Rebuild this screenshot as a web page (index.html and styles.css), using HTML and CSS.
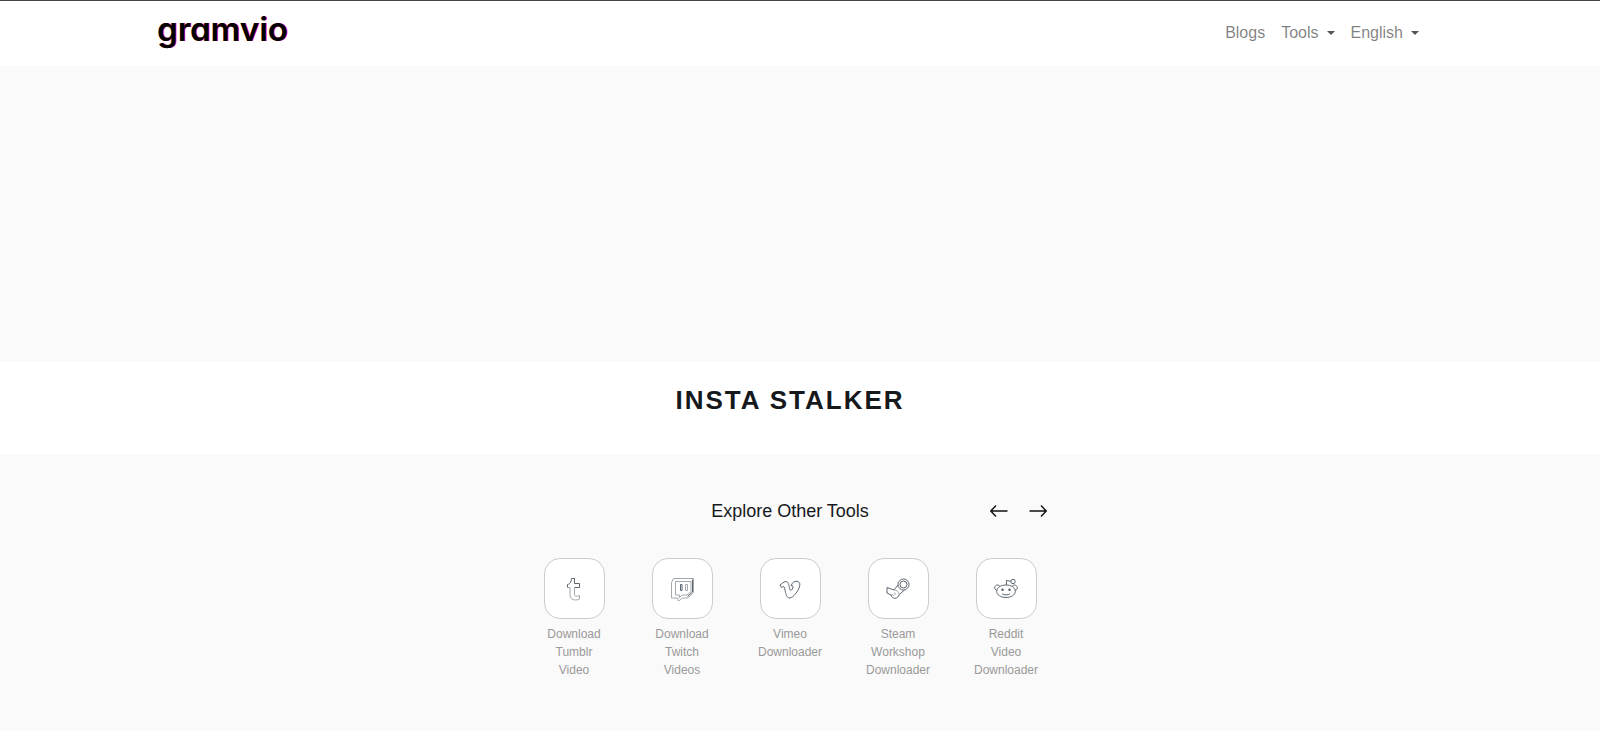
FILE: index.html
```html
<!DOCTYPE html>
<html lang="en">
<head>
    <meta charset="UTF-8">
    <meta name="viewport" content="width=device-width, initial-scale=1.0">
    <title>Insta Stalker</title>
    <link rel="stylesheet" href="styles.css">
</head>
<body>
    <header class="navbar">
        <div class="container">
            <a class="logo" href="#">gramvio</a>
            <nav class="nav-links">
                <a class="nav-link" href="#">Blogs</a>
                <button class="nav-link dropdown" type="button">Tools</button>
                <button class="nav-link dropdown" type="button">English</button>
            </nav>
        </div>
    </header>

    <div class="banner"></div>

    <main>
        <section class="title">
            <h1>INSTA STALKER</h1>
        </section>

        <section class="tools">
            <div class="tools-inner">
                <div class="tools-head">
                    <h2>Explore Other Tools</h2>
                    <div class="arrows">
                        <button class="arrow" type="button" aria-label="Previous">
                            <svg width="18" height="12" viewBox="0 0 18 12"><path d="M17.5 6H1M6 .5L.8 6 6 11.500"/></svg>
                        </button>
                        <button class="arrow" type="button" aria-label="Next">
                            <svg width="18" height="12" viewBox="0 0 18 12"><path d="M.5 6H17M12 .5L17.200 6 12 11.500"/></svg>
                        </button>
                    </div>
                </div>

                <div class="tool-list">
                    <a class="tool" href="#">
                        <span class="tool-icon">
                            <svg width="24" height="24" viewBox="0 0 24 24">
                                <path class="dark" d="M5.500 10.500V7.500C8 7 9 5.500 9.500 1.500h3v5h5v4h-5"/>
                                <path d="M5.500 10.500h2.500v7c0 3.500 2 5.500 5.500 5.500 1.500 0 3-.3 4-1v-3.500c-1 .5-2 .7-3 .7-1.400 0-2-.7-2-2v-6.700"/>
                            </svg>
                        </span>
                        <span class="tool-name">Download Tumblr Video</span>
                    </a>
                    <a class="tool" href="#">
                        <span class="tool-icon">
                            <svg width="24" height="24" viewBox="0 0 24 24">
                                <path d="M1.500 5.500l2-4h20v14l-6 5.500h-5l-3 2.500h-1.500v-2.500h-6.500z"/>
                                <path d="M5.500 4.500h15.500v10l-4 3.500h-5l-2.500 2.500v-2.500h-4z"/>
                                <path class="dark" d="M22.500 2.500v12.500l-5 4.500"/>
                                <path class="dark" d="M10.500 7.500h1.500v6h-1.500z"/>
                                <path d="M15.500 7.500h2v6h-2z"/>
                            </svg>
                        </span>
                        <span class="tool-name">Download Twitch Videos</span>
                    </a>
                    <a class="tool" href="#">
                        <span class="tool-icon">
                            <svg width="24" height="24" viewBox="0 0 24 24">
                                <path class="dark" d="M2 8C4 6.500 6 4.500 8 4.500c2.500 0 2.800 3.500 3.400 6 .4 1.800.7 3 1.200 3 .8 0 2.500-2.300 2.500-3.600 0-1.200-.9-1.400-2-1 .8-3 3-4.800 5.700-4.600 2.400.2 3.300 1.800 3 4-.6 4.800-6.500 12.400-9.900 12.700-2.700.2-3.700-2.700-4.400-5.700-.7-2.800-1-5.800-2-5.800-.6 0-1.500.7-2 1z"/>
                            </svg>
                        </span>
                        <span class="tool-name">Vimeo Downloader</span>
                    </a>
                    <a class="tool" href="#">
                        <span class="tool-icon">
                            <svg width="24" height="24" viewBox="0 0 24 24">
                                <circle class="dark" cx="17.500" cy="7.500" r="5.500"/>
                                <circle class="dark" cx="17.500" cy="7.500" r="3.500"/>
                                <path class="dark" d="M12 8l-4 5L1 10.500v5.500l4 2c.5 2 2 3.300 3.900 3.300 2.200 0 3.800-1.500 4.100-3.600l5.500-4.700"/>
                                <path d="M8 13c2.800-.2 5 1.800 5 4.500M5 17.500l1.800.7c1.800.7 3.400-1.600 1.700-2.900"/>
                            </svg>
                        </span>
                        <span class="tool-name">Steam Workshop Downloader</span>
                    </a>
                    <a class="tool" href="#">
                        <span class="tool-icon">
                            <svg width="24" height="24" viewBox="0 0 24 24">
                                <path class="dark" d="M12 8c5.200 0 9.300 2.700 9.300 6.300S17.200 20.500 12 20.500s-9.300-2.600-9.300-6.200S6.800 8 12 8z"/>
                                <path class="dark" d="M12.500 8V3.500l4.500.8M2.700 13.300C-.8 12 .8 8 3.500 8c1.200 0 1.800.5 2.300 1.200M21.300 13.300c3.500-1.300 1.900-5.300-.8-5.300-1.200 0-1.800.5-2.300 1.200"/>
                                <circle class="dark" cx="19" cy="4.500" r="2.200"/>
                                <circle class="eye" cx="8.500" cy="12.800" r="1.300"/>
                                <circle class="eye" cx="15.500" cy="12.800" r="1.300"/>
                                <path class="dark" d="M8 16.800c2 1.500 6 1.500 8 0"/>
                            </svg>
                        </span>
                        <span class="tool-name">Reddit Video Downloader</span>
                    </a>
                </div>
            </div>
        </section>
    </main>
</body>
</html>
```
FILE: styles.css
```css
* {
    box-sizing: border-box;
}

body {
    margin: 0;
    min-height: 100vh;
    display: flex;
    flex-direction: column;
    font-family: "Liberation Sans", Arial, sans-serif;
    font-size: 16px;
    color: #16191c;
    background-color: #fafafa;
}

a {
    text-decoration: none;
}

button {
    border: none;
    background: none;
    font-family: inherit;
    font-size: inherit;
    cursor: pointer;
}

/* Header */
.navbar {
    border-top: 1px solid #444;
    background-color: #fff;
    padding: 12px 20px 13px 0;
}

.container {
    max-width: 1274px;
    margin: 0 auto;
    display: flex;
    align-items: flex-start;
    justify-content: space-between;
}

.logo {
    padding-left: 4px;
    font-family: "Inter", sans-serif;
    font-size: 33px;
    font-weight: 600;
    line-height: 32px;
    font-feature-settings: "cv11";
    color: #000;
    text-shadow: 1px 0 0 #ff1a8c;
}

.nav-links {
    display: flex;
    align-items: center;
}

.nav-link {
    display: flex;
    align-items: center;
    padding: 8px;
    line-height: 24px;
    color: rgba(0, 0, 0, 0.5);
}

.dropdown::after {
    content: "";
    margin-left: 8px;
    border-top: 4px solid #555;
    border-left: 4px solid transparent;
    border-right: 4px solid transparent;
}

/* Advert space */
.banner {
    height: 296px;
}

.title {
    background-color: #fff;
    padding: 22px 20px 38px 0;
    text-align: center;
}

.title h1 {
    margin: 0;
    font-size: 26px;
    line-height: 32px;
    letter-spacing: 2px;
}

/* Tools carousel */
.tools {
    padding: 44px 20px 48px 0;
}

.tools-inner {
    max-width: 540px;
    margin: 0 auto;
}

.tools-head {
    display: grid;
    grid-template-columns: 1fr auto 1fr;
    align-items: center;
    margin-bottom: 34px;
}

.tools-head h2 {
    grid-column: 2;
    margin: 0;
    font-size: 18px;
    font-weight: 400;
    line-height: 26px;
}

.arrows {
    display: flex;
    justify-content: flex-end;
    gap: 21px;
    padding-right: 13px;
}

.arrow {
    display: flex;
    padding: 0;
}

svg {
    fill: none;
    stroke: #a3a8ac;
    stroke-width: 1;
}

.arrow svg {
    stroke: #111;
    stroke-width: 1.4;
}

.dark {
    stroke: #5b6670;
}

.eye {
    fill: #5b6670;
    stroke: none;
}

.tool-list {
    display: grid;
    grid-template-columns: repeat(5, 1fr);
}

.tool {
    display: flex;
    flex-direction: column;
    align-items: center;
    gap: 6px;
    padding: 0 20px;
    font-size: 12px;
    line-height: 18px;
    text-align: center;
    color: #999;
}

.tool-icon {
    display: flex;
    align-items: center;
    justify-content: center;
    width: 61px;
    height: 61px;
    border: 1px solid #ccc;
    border-radius: 16px;
    background-color: #fff;
}
```
